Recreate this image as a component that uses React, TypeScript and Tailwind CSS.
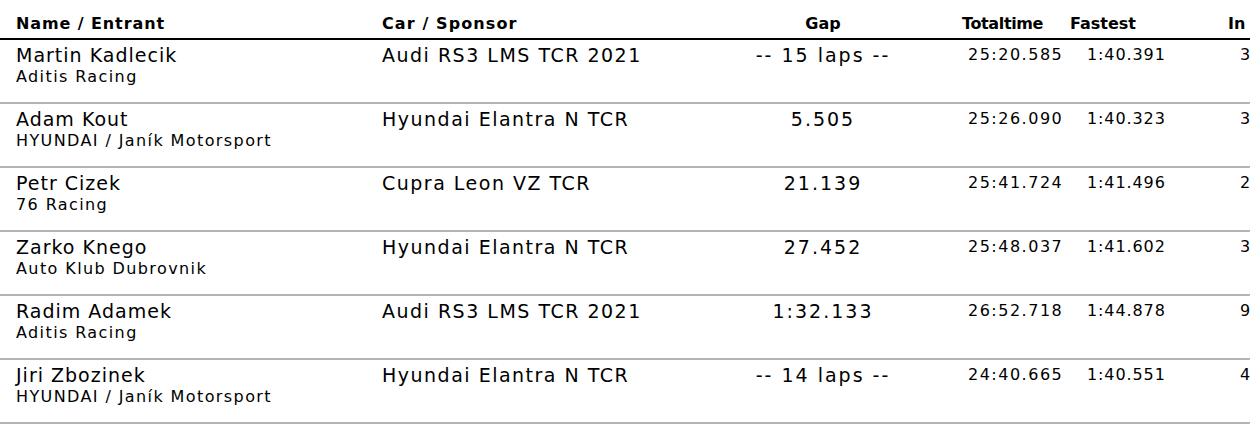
import React from "react";

type Row = {
  name: string;
  entrant: string;
  car: string;
  gap: string;
  total: string;
  fastest: string;
  inLap: string;
};

const rows: Row[] = [
  { name: "Martin Kadlecik", entrant: "Aditis Racing", car: "Audi RS3 LMS TCR 2021", gap: "-- 15 laps --", total: "25:20.585", fastest: "1:40.391", inLap: "3" },
  { name: "Adam Kout", entrant: "HYUNDAI / Janík Motorsport", car: "Hyundai Elantra N TCR", gap: "5.505", total: "25:26.090", fastest: "1:40.323", inLap: "3" },
  { name: "Petr Cizek", entrant: "76 Racing", car: "Cupra Leon VZ TCR", gap: "21.139", total: "25:41.724", fastest: "1:41.496", inLap: "2" },
  { name: "Zarko Knego", entrant: "Auto Klub Dubrovnik", car: "Hyundai Elantra N TCR", gap: "27.452", total: "25:48.037", fastest: "1:41.602", inLap: "3" },
  { name: "Radim Adamek", entrant: "Aditis Racing", car: "Audi RS3 LMS TCR 2021", gap: "1:32.133", total: "26:52.718", fastest: "1:44.878", inLap: "9" },
  { name: "Jiri Zbozinek", entrant: "HYUNDAI / Janík Motorsport", car: "Hyundai Elantra N TCR", gap: "-- 14 laps --", total: "24:40.665", fastest: "1:40.551", inLap: "4" },
];

const grid = "grid grid-cols-[382px_366px_150px_162px_140px_50px]";

export default function App() {
  return (
    <div className="w-[1250px] h-[448px] overflow-hidden bg-white text-black font-['DejaVu_Sans',_Verdana,_sans-serif]">
      <div className={`${grid} h-[40px] border-b-2 border-black text-[16px] font-bold leading-[20px] pt-[14px]`}>
        <div className="pl-4 whitespace-nowrap tracking-[0.9px]">Name / Entrant</div>
        <div className="whitespace-nowrap tracking-[1.1px]">Car / Sponsor</div>
        <div className="text-center whitespace-nowrap">Gap</div>
        <div className="pl-[64px] whitespace-nowrap tracking-[-0.4px] [word-spacing:-5px]">Total time</div>
        <div className="pl-[10px] whitespace-nowrap">Fastest</div>
        <div className="pl-[28px] whitespace-nowrap">In</div>
      </div>
      {rows.map((r, i) => (
        <div key={i} className={`${grid} h-[64px] border-b-2 border-[#b3b3b3] pt-[3px]`}>
          <div className="pl-4 whitespace-nowrap">
            <div className="text-[19px] leading-[24px] tracking-[1px]">{r.name}</div>
            <div className="text-[16px] leading-[20px] tracking-[1.4px]">{r.entrant}</div>
          </div>
          <div className="text-[19px] leading-[24px] whitespace-nowrap tracking-[1.5px]">{r.car}</div>
          <div className="text-[19px] leading-[24px] text-center whitespace-nowrap tracking-[2px]">{r.gap}</div>
          <div className="pl-[70px] text-[16px] leading-[24px] whitespace-nowrap tracking-[1.5px]">{r.total}</div>
          <div className="pl-[27px] text-[16px] leading-[24px] whitespace-nowrap tracking-[0.9px]">{r.fastest}</div>
          <div className="pl-[40px] text-[16px] leading-[24px] whitespace-nowrap">{r.inLap}</div>
        </div>
      ))}
    </div>
  );
}
